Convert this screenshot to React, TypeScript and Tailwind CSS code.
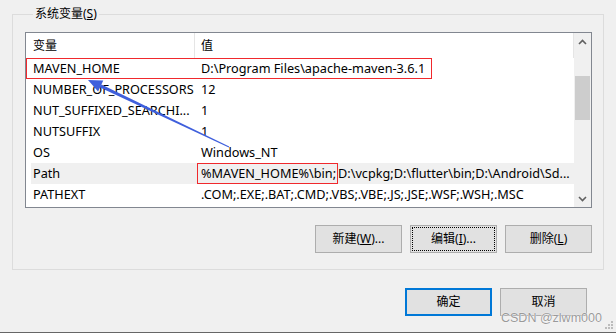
import React from 'react'

const rows: { name: string; value: string }[] = [
    { name: 'MAVEN_HOME', value: 'D:\\Program Files\\apache-maven-3.6.1' },
    { name: 'NUMBER_OF_PROCESSORS', value: '12' },
    { name: 'NUT_SUFFIXED_SEARCHI...', value: '1' },
    { name: 'NUTSUFFIX', value: '1' },
    { name: 'OS', value: 'Windows_NT' },
    { name: 'Path', value: 'D:\\vcpkg;D:\\flutter\\bin;D:\\Android\\Sd...' },
    { name: 'PATHEXT', value: '.COM;.EXE;.BAT;.CMD;.VBS;.VBE;.JS;.JSE;.WSF;.WSH;.MSC' }
]

const Chevron = ({ up }: { up?: boolean }) => (
    <svg width="9" height="6" viewBox="0 0 9 6">
        <path
            d={up ? 'M1 5 L4.5 1.5 L8 5' : 'M1 1 L4.5 4.5 L8 1'}
            fill="none"
            stroke="#606060"
            strokeWidth="1.6"
        />
    </svg>
)

const WinButton = ({ children, focused }: { children: React.ReactNode; focused?: boolean }) => (
    <button
        type="button"
        className="relative w-[87px] h-[28px] bg-[#e1e1e1] border border-[#adadad] text-[12px] text-black flex items-center justify-center"
    >
        {focused && <span className="absolute inset-[1px] border border-dotted border-black" />}
        {children}
    </button>
)

export default function App() {
    return (
        <div
            className="relative w-[616px] h-[333px] bg-[#f0f0f0] overflow-hidden border-b border-[#666666] text-[12px] text-black"
            style={{ fontFamily: '"Segoe UI", "Noto Sans", "Noto Sans CJK SC", sans-serif' }}
        >
            <div className="pl-[12px] pt-[6px]">
                <fieldset className="w-[592px] h-[264px] border border-[#dcdcdc] pl-[12px]">
                    <legend className="ml-[8px] px-[2px] leading-[16px]">
                        系统变量(<span className="underline">S</span>)
                    </legend>

                    <div className="mt-[10px] w-[567px] h-[176px] border border-[#828790] bg-white flex">
                        <div className="flex-1 flex flex-col">
                            <div className="flex h-[25px] items-center">
                                <div className="w-[169px] h-full pl-[7px] flex items-center border-r border-[#e5e5e5]">变量</div>
                                <div className="flex-1 h-full pl-[6px] flex items-center border-r border-[#e5e5e5]">值</div>
                            </div>
                            {rows.map((r) => (
                                <div
                                    key={r.name}
                                    className={
                                        'relative flex h-[21px] ml-[5px] items-center whitespace-nowrap text-[12.7px] ' +
                                        (r.name === 'Path' ? 'bg-[#f0f0f0]' : '')
                                    }
                                >
                                    {r.name === 'MAVEN_HOME' && (
                                        <span className="absolute left-[-5px] top-0 w-[406px] h-[21px] border border-[#f0292d]" />
                                    )}
                                    <div className="w-[164px] pl-[2px]">{r.name}</div>
                                    <div className="pl-[6px] flex items-center h-full">
                                        {r.name === 'Path' && (
                                            <span className="-ml-[4px] pl-[3px] pr-[1px] h-[21px] flex items-center border border-[#f0292d]">
                                                %MAVEN_HOME%\bin;
                                            </span>
                                        )}
                                        {r.value}
                                    </div>
                                </div>
                            ))}
                        </div>
                        <div className="w-[17px] bg-[#f0f0f0] flex flex-col">
                            <div className="h-[17px] flex items-center justify-center">
                                <Chevron up />
                            </div>
                            <div className="flex-1 pt-[26px]">
                                <div className="mx-[1px] h-[44px] bg-[#cdcdcd]" />
                            </div>
                            <div className="h-[17px] flex items-center justify-center">
                                <Chevron />
                            </div>
                        </div>
                    </div>

                    <div className="w-[567px] mt-[17px] flex justify-end gap-[8px]">
                        <WinButton>
                            新建(<span className="underline">W</span>)...
                        </WinButton>
                        <WinButton focused>
                            编辑(<span className="underline">I</span>)...
                        </WinButton>
                        <WinButton>
                            删除(<span className="underline">L</span>)
                        </WinButton>
                    </div>
                </fieldset>
            </div>

            <div className="mt-[18px] pr-[29px] flex justify-end gap-[8px]">
                <button
                    type="button"
                    className="w-[87px] h-[28px] bg-[#e1e1e1] border-2 border-[#0078d7] text-[12px] flex items-center justify-center"
                >
                    确定
                </button>
                <WinButton>取消</WinButton>
            </div>

            {/* annotation arrow */}
            <svg className="absolute left-0 top-0 pointer-events-none" width="616" height="333">
                <polygon points="88,80 98.1,91.4 103.3,80.6" fill="#3f5fdc" />
                <polygon points="100,87.4 101.4,84.6 229.2,146.6 228.8,147.4" fill="#3f5fdc" />
            </svg>

            {/* watermark */}
            <div
                className="absolute left-[501px] top-[310px] text-[12.5px] leading-[16px] text-[#9a9a9a]"
                style={{ fontFamily: '"Liberation Sans", Arial, sans-serif', textShadow: '0 0 1px #fff, 0 0 1px #fff' }}
            >
                CSDN @zlwm000
            </div>

            {/* resize grip */}
            <svg className="absolute right-[2px] bottom-[2px]" width="9" height="9" viewBox="0 0 9 9">
                <rect x="6" y="0" width="2" height="2" fill="#bcbcbc" />
                <rect x="3" y="3" width="2" height="2" fill="#bcbcbc" />
                <rect x="6" y="3" width="2" height="2" fill="#bcbcbc" />
                <rect x="0" y="6" width="2" height="2" fill="#bcbcbc" />
                <rect x="3" y="6" width="2" height="2" fill="#bcbcbc" />
                <rect x="6" y="6" width="2" height="2" fill="#bcbcbc" />
            </svg>
        </div>
    )
}
